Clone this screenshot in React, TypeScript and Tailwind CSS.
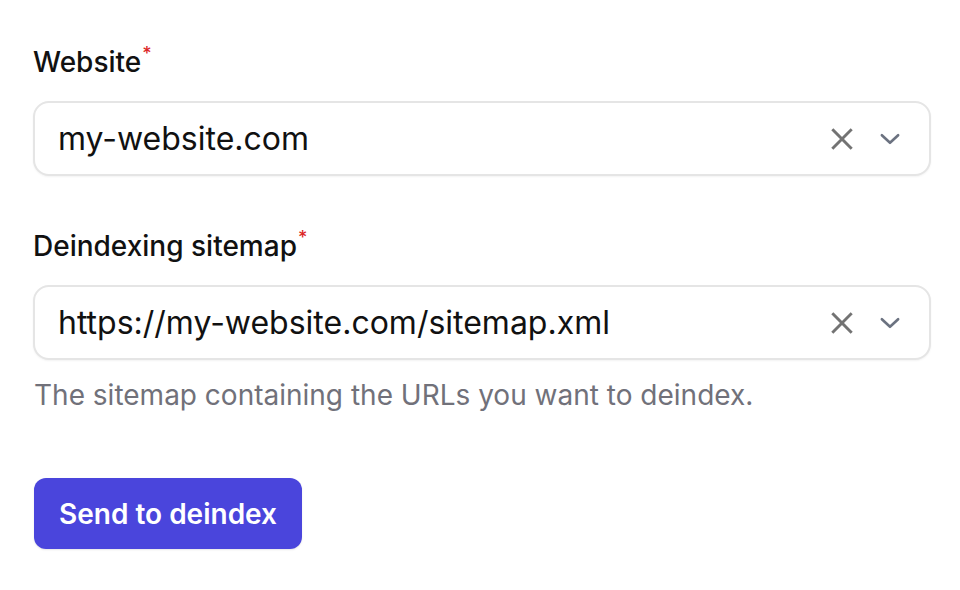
import React from "react";

function XIcon() {
  return (
    <svg width="26" height="26" viewBox="0 0 24 24" fill="none" stroke="#737373" strokeWidth="2.7" strokeLinecap="square">
      <path d="M4 4L20 20M20 4L4 20" />
    </svg>
  );
}

function Chevron() {
  return (
    <svg width="26" height="26" viewBox="0 0 24 24" fill="none" stroke="#6b7280" strokeWidth="2.4" strokeLinecap="round" strokeLinejoin="round">
      <path d="M4.5 8.5L12 15.5L19.5 8.5" />
    </svg>
  );
}

function Field({ label, value }: { label: string; value: string }) {
  return (
    <div className="flex flex-col">
      <div className="flex items-start text-[28px] font-medium text-[#111111] leading-[34px]">
        <span>{label}</span>
        <span className="text-[#dc2626] text-[18px] leading-[18px] ml-[1px] mt-[0px]">*</span>
      </div>
      <div className="mt-[22px] w-[898px] h-[75px] rounded-[16px] border-2 border-[#e5e5e5] bg-white flex items-center pl-[23px] pr-[26px] shadow-[0_1px_2px_rgba(0,0,0,0.05)]">
        <span className="flex-1 text-[32px] text-[#111111]">{value}</span>
        <div className="flex items-center gap-[22px]">
          <XIcon />
          <Chevron />
        </div>
      </div>
    </div>
  );
}

export default function App() {
  return (
    <div className="w-[960px] h-[590px] bg-white pl-[33px] pt-[45px]" style={{ fontFamily: "Inter, 'Noto Sans', sans-serif" }}>
      <Field label="Website" value="my-website.com" />
      <div className="mt-[53px]">
        <Field label="Deindexing sitemap" value="https://my-website.com/sitemap.xml" />
      </div>
      <p className="mt-[17px] text-[28px] text-[#71717a] leading-[36px] ml-[1px]">
        The sitemap containing the URLs you want to deindex.
      </p>
      <button className="mt-[65px] ml-[1px] h-[71px] px-[25px] rounded-[12px] bg-[#4a45dc] text-white text-[28px] font-semibold shadow-[0_1px_2px_rgba(0,0,0,0.1)]">
        Send to deindex
      </button>
    </div>
  );
}
